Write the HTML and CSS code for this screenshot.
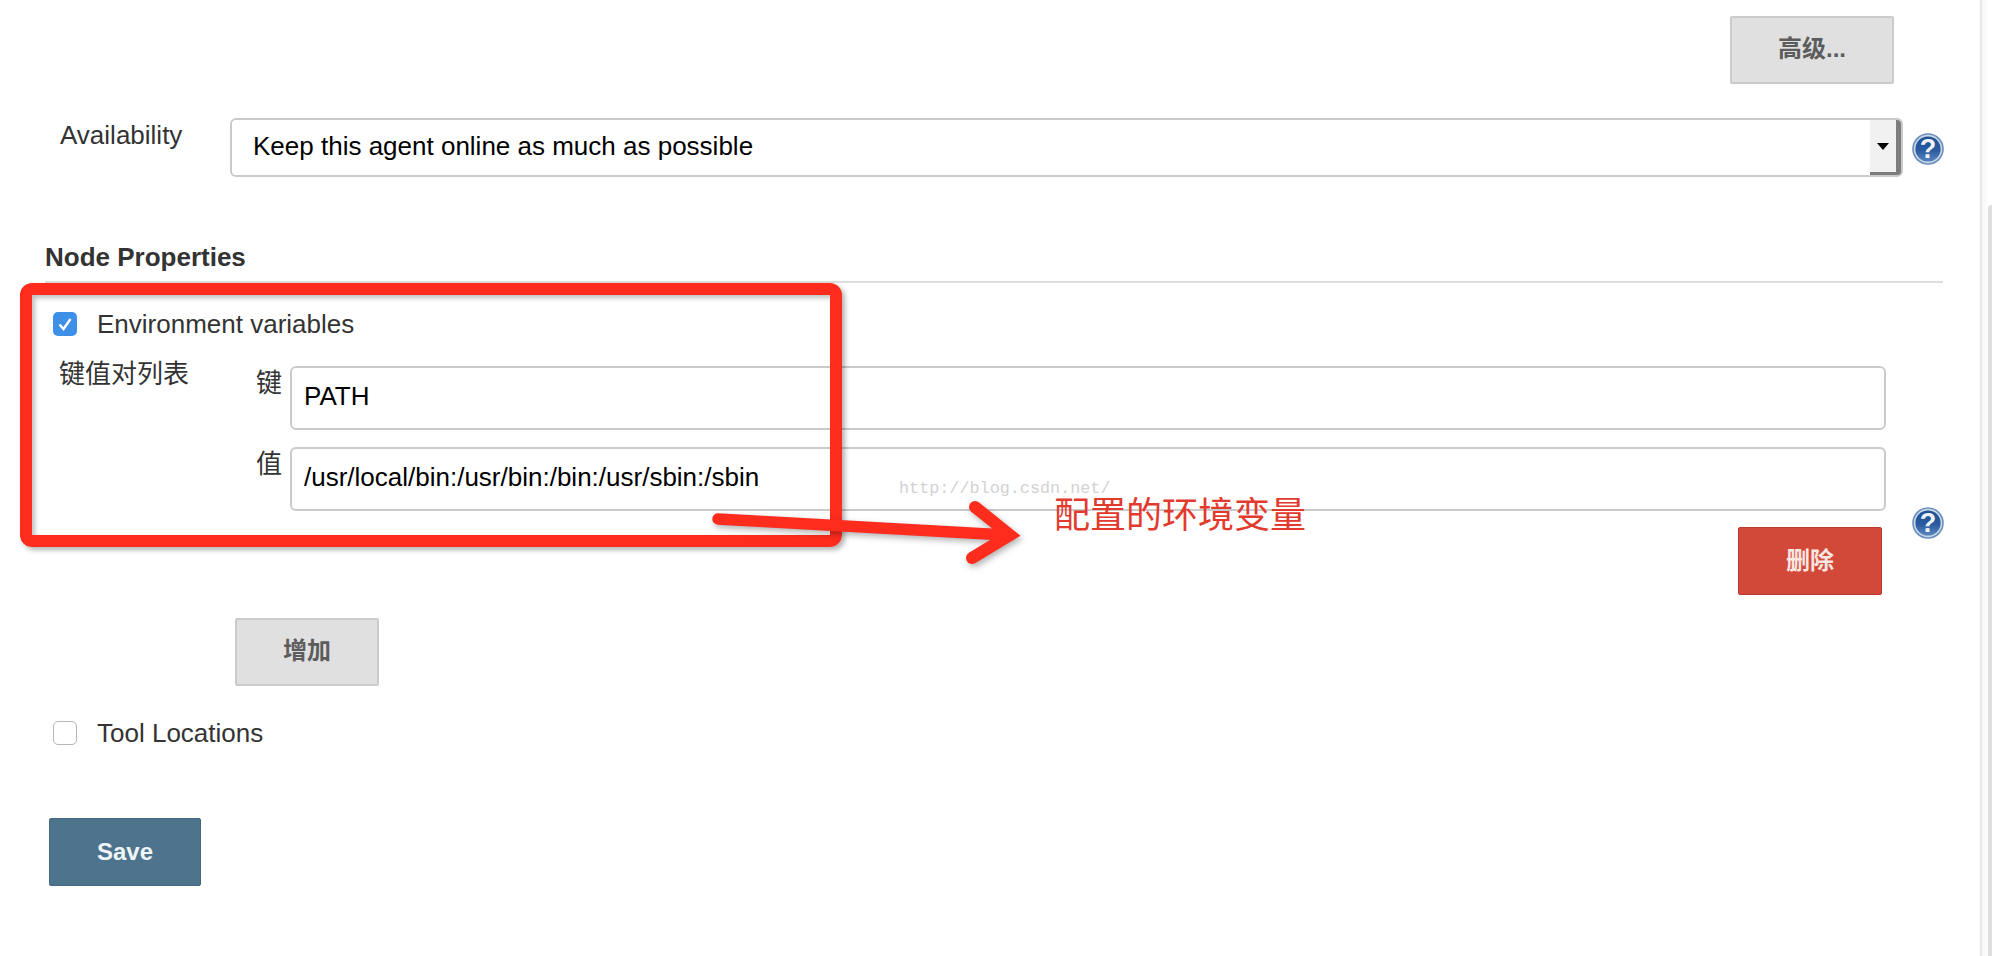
FILE: index.html
```html
<!DOCTYPE html>
<html lang="zh">
<head>
<meta charset="utf-8">
<title>Node configuration</title>
<link rel="stylesheet" href="styles.css">
</head>
<body>
<svg class="defs" width="0" height="0" aria-hidden="true">
  <defs>
    <linearGradient id="helpFill" x1="0" y1="0" x2="0" y2="1">
      <stop offset="0" stop-color="#1f4f94"/>
      <stop offset="0.55" stop-color="#2a5c9f"/>
      <stop offset="1" stop-color="#5b86bd"/>
    </linearGradient>
    <symbol id="help" viewBox="0 0 32 32">
      <circle cx="16" cy="16" r="15.8" fill="#6c8fbc"/>
      <circle cx="16" cy="16" r="14.2" fill="#c7d6e8"/>
      <circle cx="16" cy="16" r="12.6" fill="url(#helpFill)"/>
      <text x="16" y="25" text-anchor="middle" class="help-mark">?</text>
    </symbol>
  </defs>
</svg>
<div class="page">
  <main class="main">
    <div class="advanced-row">
      <button class="btn btn-grey btn-advanced">高级...</button>
    </div>

    <div class="avail-row">
      <label class="avail-label">Availability</label>
      <div class="select">
        <span class="select-value">Keep this agent online as much as possible</span>
        <span class="select-arrow"><i class="caret"></i></span>
      </div>
      <svg class="help"><use href="#help"/></svg>
    </div>

    <h2 class="section-title">Node Properties</h2>

    <div class="check-row check-row-env">
      <span class="check check-on">
        <svg viewBox="0 0 24 24" width="24" height="24"><path d="M6.5 12.5l4 4.5 7-10" fill="none" stroke="#fff" stroke-width="2.4"/></svg>
      </span>
      <span class="check-label">Environment variables</span>
    </div>

    <div class="kv-block">
      <div class="kv-title">键值对列表</div>
      <div class="kv-fields">
        <div class="kv-row">
          <span class="kv-key">键</span>
          <div class="text-input">PATH</div>
        </div>
        <div class="kv-row kv-row-value">
          <span class="kv-key">值</span>
          <div class="text-input">/usr/local/bin:/usr/bin:/bin:/usr/sbin:/sbin</div>
        </div>
        <div class="delete-row">
          <button class="btn btn-delete">删除</button>
          <svg class="help help-delete"><use href="#help"/></svg>
        </div>
      </div>
    </div>

    <div class="add-row">
      <button class="btn btn-grey">增加</button>
    </div>

    <div class="check-row check-row-tool">
      <span class="check"></span>
      <span class="check-label">Tool Locations</span>
    </div>

    <div class="save-row">
      <button class="btn btn-save">Save</button>
    </div>
  </main>
  <aside class="scroll-track"><div class="scroll-thumb"></div></aside>

  <div class="note-box"></div>
  <div class="watermark">http://blog.csdn.net/</div>
  <svg class="note-arrow" width="340" height="90" viewBox="0 0 340 90">
    <path d="M18 29 L306 45" fill="none" stroke="#fd2c1d" stroke-width="11.5" stroke-linecap="round"/>
    <path d="M275 17 L310 45 L272 68" fill="none" stroke="#fd2c1d" stroke-width="12" stroke-linejoin="miter"/>
    <circle cx="275" cy="17" r="6" fill="#fd2c1d"/>
    <circle cx="272" cy="68" r="6" fill="#fd2c1d"/>
  </svg>
  <div class="note-text">配置的环境变量</div>
</div>
</body>
</html>
```
FILE: styles.css
```css
* { box-sizing: border-box; }
html, body { margin: 0; padding: 0; background: #fff; }
body {
  width: 1992px;
  height: 956px;
  overflow: hidden;
  font-family: "Liberation Sans", "Noto Sans CJK SC", sans-serif;
  color: #333;
}
.defs { position: absolute; }
.page { position: relative; display: flex; width: 1992px; height: 956px; }
.main { width: 1980px; flex: none; }
.scroll-track { width: 12px; flex: none; background: linear-gradient(90deg, #f6f6f6, #fff 70%); border-left: 2px solid #e6e6e6; position: relative; }
.scroll-thumb { position: absolute; left: 6px; right: 0; top: 205px; bottom: 0; background: #dedede; border-radius: 6px 0 0 0; }

.btn {
  display: block;
  width: 144px;
  height: 68px;
  padding: 0;
  border-radius: 2px;
  font-family: "Liberation Sans", "Noto Sans CJK SC", sans-serif;
  font-size: 24px;
  font-weight: 700;
  cursor: pointer;
}
.btn-grey { background: #e0e0e0; border: 2px solid #cbcbcb; color: #5c5c5c; padding-bottom: 7px; }
.btn-advanced { width: 164px; }
.btn-delete { background: #d24939; border: 1px solid #bd3a2c; color: #fbe6e2; padding-bottom: 6px; }
.btn-save { width: 152px; background: #4d748c; border: 1px solid #46697f; color: #eef4f7; padding-bottom: 1px; }

.advanced-row { display: flex; justify-content: flex-end; padding: 16px 86px 0 0; }

.avail-row { display: flex; align-items: flex-start; margin-top: 34px; padding-left: 60px; }
.avail-label { width: 170px; flex: none; font-size: 26px; line-height: 34px; color: #333; }
.select {
  width: 1673px;
  height: 59px;
  flex: none;
  display: flex;
  justify-content: space-between;
  border: 2px solid #cacaca;
  border-radius: 6px;
  background: #fff;
  overflow: hidden;
}
.select-value { padding-left: 21px; font-size: 26px; line-height: 52px; color: #000; }
.select-arrow {
  width: 31px;
  background: #f1f1f1;
  border-right: 5px solid #7d7d7d;
  border-bottom: 3px solid #7d7d7d;
  display: flex;
  align-items: center;
  justify-content: center;
}
.caret { width: 0; height: 0; border-left: 6px solid transparent; border-right: 6px solid transparent; border-top: 7px solid #000; }
.help { width: 32px; height: 32px; flex: none; display: block; }
.avail-row .help { margin: 15px 0 0 9px; }
.help-mark { font-family: "Liberation Sans", sans-serif; font-size: 27px; font-weight: 700; fill: #eef3f9; }

.section-title {
  margin: 63px 37px 0 45px;
  height: 43px;
  border-bottom: 2px solid #dedede;
  font-size: 26px;
  line-height: 34px;
  font-weight: 700;
  color: #333;
}

.check-row { display: flex; align-items: center; padding-left: 53px; height: 24px; }
.check-row-env { margin-top: 29px; }
.check-row-tool { margin-top: 35px; }
.check {
  width: 24px;
  height: 24px;
  flex: none;
  border: 1px solid #b5b5b5;
  border-radius: 5px;
  background: #fff;
  margin-right: 20px;
  display: block;
}
.check-on { background: #3d8fe8; border: 0; }
.check-on svg { display: block; }
.check-label { font-size: 26px; line-height: 24px; color: #333; }

.kv-block { display: flex; align-items: flex-start; margin-top: 20px; padding-left: 59px; }
.kv-title { width: 197px; flex: none; font-size: 26px; line-height: 34px; padding-top: 1px; color: #333; }
.kv-fields { flex: 1; min-width: 0; margin-top: 10px; }
.kv-row { display: flex; align-items: flex-start; }
.kv-row-value { margin-top: 17px; }
.kv-key { width: 34px; flex: none; font-size: 26px; line-height: 34px; color: #333; }
.text-input {
  width: 1596px;
  height: 64px;
  flex: none;
  border: 2px solid #cacaca;
  border-radius: 6px;
  padding-left: 12px;
  font-size: 26px;
  line-height: 57px;
  color: #000;
  background: #fff;
}
.delete-row { display: flex; align-items: flex-start; margin-top: 16px; padding-left: 1482px; }
.help-delete { margin: -20px 0 0 30px; }

.add-row { padding-left: 235px; margin-top: 23px; }
.save-row { padding-left: 49px; margin-top: 73px; }

.note-box {
  position: absolute;
  left: 20px;
  top: 283px;
  width: 822px;
  height: 264px;
  border: 12px solid #fd2c1d;
  border-radius: 12px;
  box-shadow: 3px 3px 5px rgba(0,0,0,.3), inset 3px 3px 5px rgba(0,0,0,.25);
}
.note-arrow { position: absolute; left: 700px; top: 490px; filter: drop-shadow(2px 3px 3px rgba(0,0,0,.3)); }
.watermark {
  position: absolute;
  left: 899px;
  top: 481px;
  font-family: "Liberation Mono", monospace;
  font-size: 16.8px;
  line-height: 16px;
  color: #d2d2d2;
}
.note-text {
  position: absolute;
  left: 1054px;
  top: 486px;
  font-family: "Noto Sans CJK SC", sans-serif;
  font-size: 36px;
  line-height: 52px;
  color: #e33a2e;
}
```
